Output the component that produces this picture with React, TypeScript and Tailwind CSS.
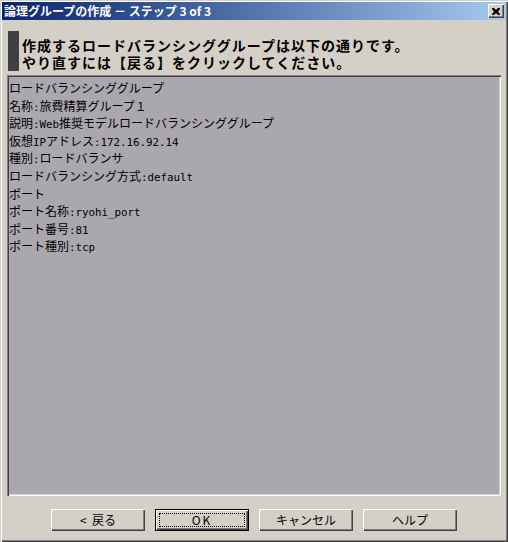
import React from "react";

const lines = [
  "ロードバランシンググループ",
  "名称:旅費精算グループ１",
  "説明:Web推奨モデルロードバランシンググループ",
  "仮想IPアドレス:172.16.92.14",
  "種別:ロードバランサ",
  "ロードバランシング方式:default",
  "ポート",
  "ポート名称:ryohi_port",
  "ポート番号:81",
  "ポート種別:tcp",
];

function Line({ text }: { text: string }) {
  const parts = text.split(/([\x20-\x7e]+)/).filter((p) => p.length > 0);
  return (
    <div className="whitespace-nowrap h-[17.6px]">
      {parts.map((p, i) =>
        /^[\x20-\x7e]+$/.test(p) ? (
          <span key={i} className="[font-family:'DejaVu_Sans_Mono',monospace] text-[10.8px]">
            {p}
          </span>
        ) : (
          <span key={i}>{p}</span>
        )
      )}
    </div>
  );
}

function Btn({ label, isDefault }: { label: string; isDefault?: boolean }) {
  if (isDefault) {
    return (
      <div className="w-[94px] h-[22px] border border-black bg-[#d4d0c8] shadow-[inset_1px_1px_0_#ffffff,inset_-1px_-1px_0_#404040,inset_-2px_-2px_0_#808080] p-[3px] flex">
        <div className="flex-1 border border-dotted border-black flex items-center justify-center text-[12px] leading-none text-black tracking-[2px]">
          {label}
        </div>
      </div>
    );
  }
  return (
    <div className="w-[94px] h-[22px] bg-[#d4d0c8] shadow-[inset_1px_1px_0_#ffffff,inset_-1px_-1px_0_#404040,inset_-2px_-2px_0_#808080] flex items-center justify-center text-[12px] leading-none text-black whitespace-pre">
      {label}
    </div>
  );
}

export default function App() {
  return (
    <div className="w-[508px] h-[542px] bg-[#d4d0c8] p-[2px] flex flex-col [font-family:'Noto_Sans_CJK_JP',sans-serif] shadow-[inset_1px_1px_0_#d4d0c8,inset_2px_2px_0_#ffffff,inset_-1px_-1px_0_#404040,inset_-2px_-2px_0_#808080]">
      <div className="h-[18px] flex items-center justify-between bg-gradient-to-r from-[#0a246a] to-[#a6caf0]">
        <span className="ml-[2px] text-white text-[12px] font-bold leading-none whitespace-nowrap">
          論理グループの作成 － ステップ 3 of 3
        </span>
        <div className="mr-[2px] w-[16px] h-[14px] bg-[#d4d0c8] shadow-[inset_1px_1px_0_#ffffff,inset_-1px_-1px_0_#404040,inset_-2px_-2px_0_#808080] flex items-center justify-center">
          <svg width="8" height="7" viewBox="0 0 8 7">
            <path d="M0 0h2l2 2 2-2h2v1L6 3.5 8 6v1H6L4 5 2 7H0V6l2-2.5L0 1z" fill="#000" />
          </svg>
        </div>
      </div>
      <div className="h-[55px] flex pl-[6px] pt-[11px]">
        <div className="w-[11px] h-[40px] bg-[#404040]" />
        <div className="ml-[3px] pt-[6px] text-[14px] tracking-[1px] font-bold leading-[17px] text-black whitespace-nowrap">
          <div className="h-[17px]">作成するロードバランシンググループは以下の通りです。</div>
          <div className="h-[17px]">やり直すには【戻る】をクリックしてください。</div>
        </div>
      </div>
      <div className="mx-[5px] h-[421px] bg-[#aba7ae] shadow-[inset_1px_1px_0_#808080,inset_2px_2px_0_#404040,inset_-1px_-1px_0_#ffffff,inset_-2px_-2px_0_#d4d0c8] pt-[4px] pl-[2px] text-[12px] leading-[17.6px] text-black">
        {lines.map((l) => (
          <Line key={l} text={l} />
        ))}
      </div>
      <div className="mt-[13px] flex justify-center gap-[10px]">
        <Btn label="<  戻る" />
        <Btn label="OK" isDefault />
        <Btn label="キャンセル" />
        <Btn label="ヘルプ" />
      </div>
    </div>
  );
}
